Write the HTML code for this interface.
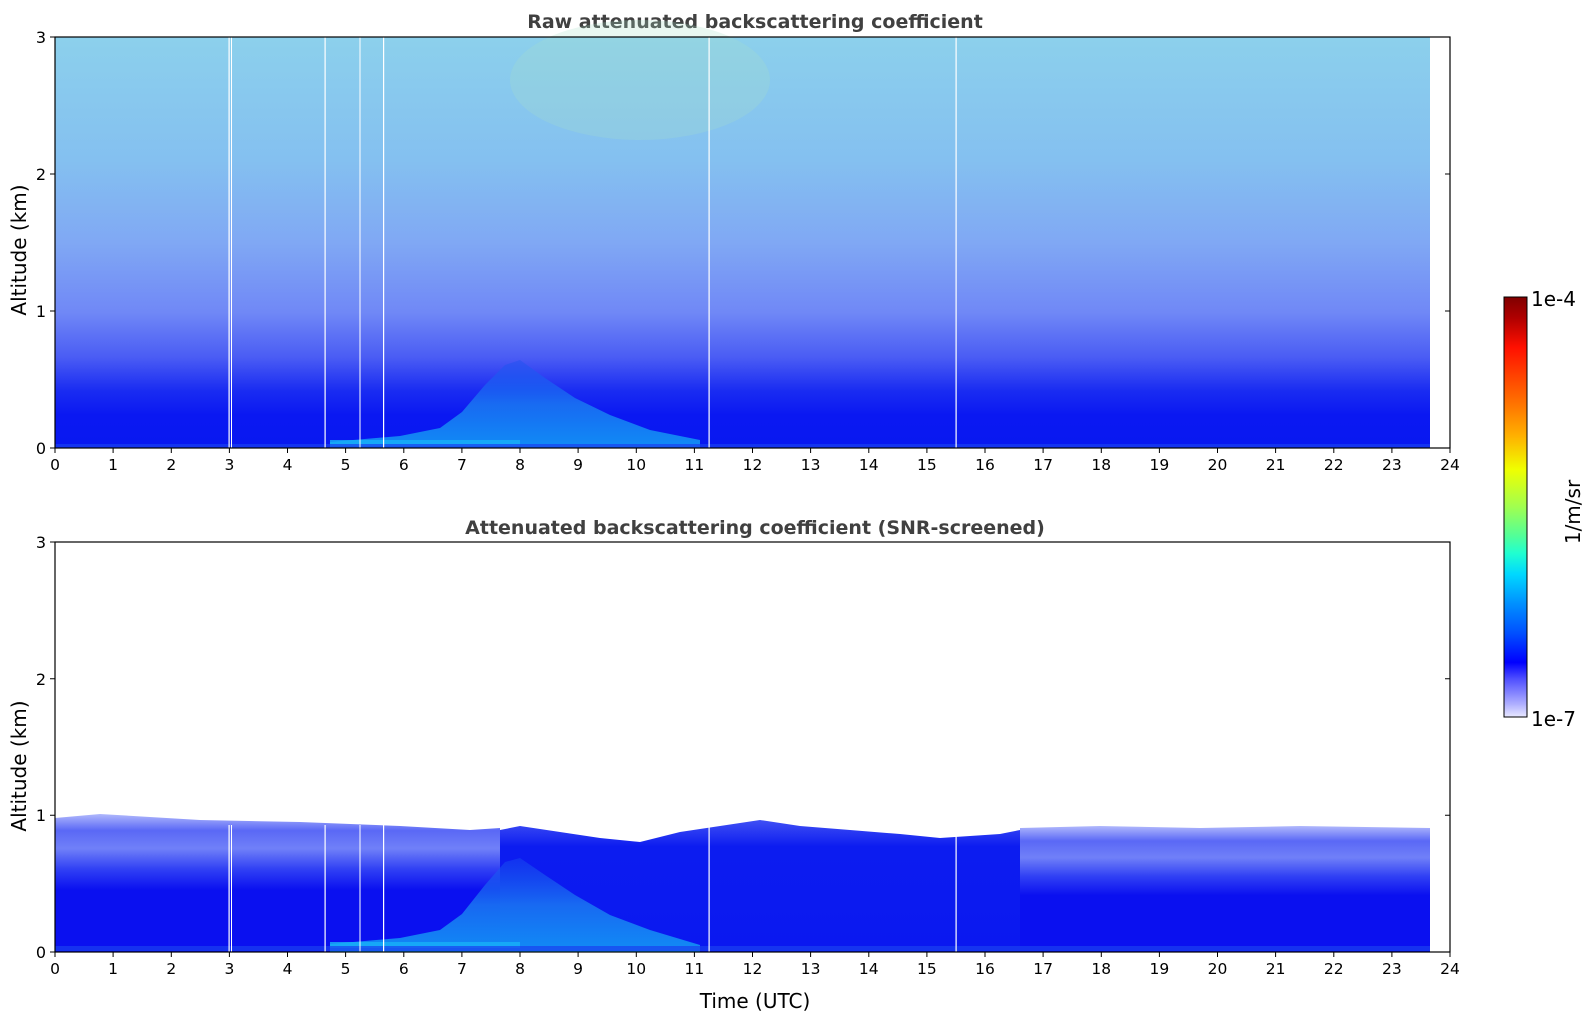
<!DOCTYPE html>
<html><head><meta charset="utf-8"><style>
html,body{margin:0;padding:0;background:#fff;}
svg{display:block;font-family:"DejaVu Sans","Liberation Sans",sans-serif;}
</style></head><body>
<svg width="1595" height="1020" viewBox="0 0 1595 1020" xmlns="http://www.w3.org/2000/svg">
<defs>
<linearGradient id="topg" x1="0" y1="1" x2="0" y2="0">
<stop offset="0" stop-color="#0818f0"/>
<stop offset="0.08" stop-color="#0a18f2"/>
<stop offset="0.14" stop-color="#1a2cf2"/>
<stop offset="0.22" stop-color="#4a5cf4"/>
<stop offset="0.33" stop-color="#7088f6"/>
<stop offset="0.5" stop-color="#80a8f4"/>
<stop offset="0.7" stop-color="#84c0f0"/>
<stop offset="1" stop-color="#8cd0ec"/>
</linearGradient>
<linearGradient id="bump" x1="0" y1="1" x2="0" y2="0">
<stop offset="0" stop-color="#12a0f6"/>
<stop offset="0.5" stop-color="#1a78f2"/>
<stop offset="1" stop-color="#1a50f0" stop-opacity="0.5"/>
</linearGradient>
<linearGradient id="side" x1="0" y1="1" x2="0" y2="0">
<stop offset="0" stop-color="#0a10f0"/>
<stop offset="0.45" stop-color="#0a10f0"/>
<stop offset="0.6" stop-color="#3040f4"/>
<stop offset="0.75" stop-color="#7080f8"/>
<stop offset="0.88" stop-color="#5a68f6"/>
<stop offset="1" stop-color="#b0b8fc"/>
</linearGradient>
<linearGradient id="mid" x1="0" y1="1" x2="0" y2="0">
<stop offset="0" stop-color="#0a18f0"/>
<stop offset="0.8" stop-color="#0c1cf0"/>
<stop offset="1" stop-color="#4050f4"/>
</linearGradient>
<linearGradient id="cb" x1="0" y1="0" x2="0" y2="1">
<stop offset="0" stop-color="#800000"/>
<stop offset="0.05" stop-color="#b00000"/>
<stop offset="0.12" stop-color="#ff1000"/>
<stop offset="0.25" stop-color="#ff7000"/>
<stop offset="0.33" stop-color="#ffb000"/>
<stop offset="0.41" stop-color="#f0ff00"/>
<stop offset="0.5" stop-color="#a0ff50"/>
<stop offset="0.57" stop-color="#50ff9a"/>
<stop offset="0.61" stop-color="#20ffd0"/>
<stop offset="0.66" stop-color="#00d8ff"/>
<stop offset="0.73" stop-color="#0090ff"/>
<stop offset="0.8" stop-color="#0050ff"/>
<stop offset="0.87" stop-color="#0000ff"/>
<stop offset="0.91" stop-color="#5050ff"/>
<stop offset="0.94" stop-color="#8080ff"/>
<stop offset="0.97" stop-color="#b0b0ff"/>
<stop offset="1" stop-color="#e8e8ff"/>
</linearGradient>
</defs>

<!-- TOP PLOT -->
<text x="755" y="28" text-anchor="middle" font-size="19" font-weight="bold" fill="#404040">Raw attenuated backscattering coefficient</text>
<rect x="55" y="37" width="1375" height="411" fill="url(#topg)"/>
<ellipse cx="640" cy="80" rx="130" ry="60" fill="#a8e0c8" opacity="0.25"/>
<polygon points="330,442 400,436 440,428 462,412 485,385 505,365 520,360 545,378 575,398 610,415 650,430 700,440 700,448 330,448" fill="url(#bump)" opacity="0.85"/>
<rect x="330" y="440" width="190" height="6" fill="#18b0f8" opacity="0.8"/>
<rect x="55" y="444" width="1375" height="4" fill="#1a40f0" opacity="0.7"/>
<g fill="#fff">
<rect x="228.5" y="37" width="1.2" height="411"/><rect x="231" y="37" width="1" height="411"/>
<rect x="324.5" y="37" width="1.2" height="411"/><rect x="359.5" y="37" width="1" height="411"/>
<rect x="383" y="37" width="1.2" height="411"/><rect x="708.5" y="37" width="1.2" height="411"/>
<rect x="955.5" y="37" width="1.2" height="411"/>
</g>
<rect x="55" y="37" width="1395" height="411" fill="none" stroke="#000" stroke-width="1.2"/>

<!-- BOTTOM PLOT -->
<text x="755" y="534" text-anchor="middle" font-size="19" font-weight="bold" fill="#404040">Attenuated backscattering coefficient (SNR-screened)</text>
<polygon points="55,818 100,814 200,820 300,822 400,826 470,830 500,828 500,952 55,952" fill="url(#side)"/>
<polygon points="500,830 520,826 560,832 600,838 640,842 680,832 720,826 760,820 800,826 850,830 900,834 940,838 1000,834 1020,830 1020,952 500,952" fill="url(#mid)"/>
<polygon points="1020,828 1100,826 1200,828 1300,826 1430,828 1430,952 1020,952" fill="url(#side)"/>
<polygon points="330,944 400,938 440,930 462,914 485,885 505,862 520,858 545,875 575,895 610,915 650,930 700,945 700,952 330,952" fill="url(#bump)" opacity="0.85"/>
<rect x="330" y="942" width="190" height="6" fill="#18b0f8" opacity="0.8"/>
<rect x="55" y="946" width="1375" height="5" fill="#1a40f0" opacity="0.7"/>
<g fill="#fff">
<rect x="228.5" y="825" width="1.2" height="127"/><rect x="231" y="825" width="1" height="127"/>
<rect x="324.5" y="825" width="1.2" height="127"/><rect x="359.5" y="825" width="1" height="127"/>
<rect x="383" y="825" width="1.2" height="127"/><rect x="708.5" y="825" width="1.2" height="127"/>
<rect x="955.5" y="835" width="1.2" height="117"/>
</g>
<rect x="55" y="542" width="1395" height="410" fill="none" stroke="#000" stroke-width="1.2"/>

<!-- ticks & labels -->
<g stroke="#000" stroke-width="1">
<path d="M55 448v5M113.1 448v5M171.3 448v5M229.4 448v5M287.5 448v5M345.6 448v5M403.8 448v5M461.9 448v5M520 448v5M578.1 448v5M636.3 448v5M694.4 448v5M752.5 448v5M810.6 448v5M868.8 448v5M926.9 448v5M985 448v5M1043.1 448v5M1101.3 448v5M1159.4 448v5M1217.5 448v5M1275.6 448v5M1333.8 448v5M1391.9 448v5M1450 448v5"/>
<path d="M55 952v5M113.1 952v5M171.3 952v5M229.4 952v5M287.5 952v5M345.6 952v5M403.8 952v5M461.9 952v5M520 952v5M578.1 952v5M636.3 952v5M694.4 952v5M752.5 952v5M810.6 952v5M868.8 952v5M926.9 952v5M985 952v5M1043.1 952v5M1101.3 952v5M1159.4 952v5M1217.5 952v5M1275.6 952v5M1333.8 952v5M1391.9 952v5M1450 952v5"/>
<path d="M50 448h5M50 311h5M50 174h5M50 37h5M1450 311h-5M1450 174h-5"/>
<path d="M50 952h5M50 815.3h5M50 678.7h5M50 542h5M1450 815.3h-5M1450 678.7h-5"/>
</g>
<g font-size="15.5" fill="#000" text-anchor="middle">
<g transform="translate(0,470)">
<text x="55">0</text><text x="113.1">1</text><text x="171.3">2</text><text x="229.4">3</text><text x="287.5">4</text><text x="345.6">5</text><text x="403.8">6</text><text x="461.9">7</text><text x="520">8</text><text x="578.1">9</text><text x="636.3">10</text><text x="694.4">11</text><text x="752.5">12</text><text x="810.6">13</text><text x="868.8">14</text><text x="926.9">15</text><text x="985">16</text><text x="1043.1">17</text><text x="1101.3">18</text><text x="1159.4">19</text><text x="1217.5">20</text><text x="1275.6">21</text><text x="1333.8">22</text><text x="1391.9">23</text><text x="1450">24</text>
</g>
<g transform="translate(0,974)">
<text x="55">0</text><text x="113.1">1</text><text x="171.3">2</text><text x="229.4">3</text><text x="287.5">4</text><text x="345.6">5</text><text x="403.8">6</text><text x="461.9">7</text><text x="520">8</text><text x="578.1">9</text><text x="636.3">10</text><text x="694.4">11</text><text x="752.5">12</text><text x="810.6">13</text><text x="868.8">14</text><text x="926.9">15</text><text x="985">16</text><text x="1043.1">17</text><text x="1101.3">18</text><text x="1159.4">19</text><text x="1217.5">20</text><text x="1275.6">21</text><text x="1333.8">22</text><text x="1391.9">23</text><text x="1450">24</text>
</g>
</g>
<g font-size="16" fill="#000" text-anchor="end">
<text x="46" y="454">0</text><text x="46" y="317">1</text><text x="46" y="180">2</text><text x="46" y="43">3</text>
<text x="46" y="958">0</text><text x="46" y="821">1</text><text x="46" y="685">2</text><text x="46" y="548">3</text>
</g>
<text transform="translate(26,250) rotate(-90)" text-anchor="middle" font-size="20">Altitude (km)</text>
<text transform="translate(26,766) rotate(-90)" text-anchor="middle" font-size="20">Altitude (km)</text>
<text x="755" y="1008" text-anchor="middle" font-size="20">Time (UTC)</text>

<!-- colorbar -->
<rect x="1504" y="297" width="23" height="420" fill="url(#cb)" stroke="#000" stroke-width="1"/>
<text x="1531" y="306" font-size="20">1e-4</text>
<text x="1531" y="726" font-size="20">1e-7</text>
<text transform="translate(1580,512) rotate(-90)" text-anchor="middle" font-size="20">1/m/sr</text>
</svg>
</body></html>
